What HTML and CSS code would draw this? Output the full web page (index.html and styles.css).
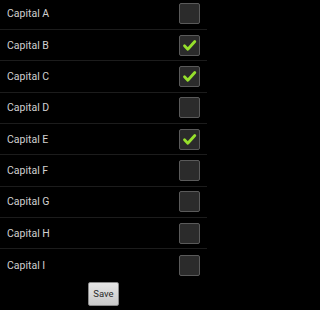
FILE: index.html
```html
<!DOCTYPE html>
<html>
<head>
<meta charset="utf-8">
<link rel="stylesheet" href="styles.css">
</head>
<body>
<div class="screen">
  <ul class="list">
    <li class="row"><span class="label">Capital A</span><span class="box"></span></li>
    <li class="row"><span class="label">Capital B</span><span class="box on"><svg viewBox="0 0 21 21"><path d="M5.5 10.8 L8.8 14.3 L15.8 6.5" /></svg></span></li>
    <li class="row"><span class="label">Capital C</span><span class="box on"><svg viewBox="0 0 21 21"><path d="M5.5 10.8 L8.8 14.3 L15.8 6.5" /></svg></span></li>
    <li class="row"><span class="label">Capital D</span><span class="box"></span></li>
    <li class="row"><span class="label">Capital E</span><span class="box on"><svg viewBox="0 0 21 21"><path d="M5.5 10.8 L8.8 14.3 L15.8 6.5" /></svg></span></li>
    <li class="row"><span class="label">Capital F</span><span class="box"></span></li>
    <li class="row"><span class="label">Capital G</span><span class="box"></span></li>
    <li class="row"><span class="label">Capital H</span><span class="box"></span></li>
    <li class="row last"><span class="label">Capital I</span><span class="box"></span></li>
  </ul>
  <div class="actions"><button class="save">Save</button></div>
</div>
</body>
</html>
```
FILE: styles.css
```css
html, body {
  margin: 0;
  padding: 0;
  background: #000;
}
.screen {
  width: 207px;
  height: 310px;
  overflow: hidden;
  display: flex;
  flex-direction: column;
  font-family: Roboto, "Noto Sans", sans-serif;
}
.list {
  list-style: none;
  margin: -1.5px 0 0 0;
  padding: 0;
}
.row {
  box-sizing: border-box;
  height: 31.36px;
  display: flex;
  align-items: center;
  justify-content: space-between;
  padding: 0 7px 0 7px;
  border-bottom: 1px solid #1c1c1c;
}
.row.last {
  border-bottom: none;
}
.label {
  color: #d0d0d0;
  font-size: 10.5px;
  letter-spacing: 0;
}
.box {
  box-sizing: border-box;
  width: 21px;
  height: 21px;
  border: 1.5px solid #5a5a5a;
  border-radius: 2px;
  background: #2b2b2b;
  display: flex;
  align-items: center;
  justify-content: center;
}
.box svg {
  width: 21px;
  height: 21px;
  flex: none;
  fill: none;
  stroke: #96e02c;
  stroke-width: 2.8;
  stroke-linecap: round;
  stroke-linejoin: round;
}
.actions {
  display: flex;
  justify-content: center;
  padding-top: 1px;
}
.save {
  width: 31px;
  height: 24px;
  padding: 0;
  border: 1px solid #8a8a8a;
  border-radius: 2px;
  background: linear-gradient(#e6e6e6, #c9c9c9);
  color: #2a2a2a;
  font-family: Roboto, "Noto Sans", sans-serif;
  font-size: 9.5px;
}
```
